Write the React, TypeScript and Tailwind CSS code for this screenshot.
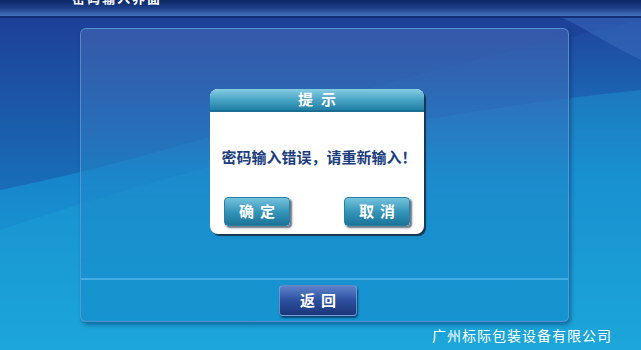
import React from "react";

const cjk = { fontFamily: '"Noto Sans CJK SC", "Noto Sans", sans-serif' };

function TealButton({ label }: { label: string }) {
  return (
    <div className="w-[66px] h-[29px] rounded-[4px] bg-gradient-to-b from-[#74c3dc] via-[#3596ba] to-[#1c7398] border border-[#2b7fa3] shadow-[2px_2px_2px_rgba(0,20,50,0.6)] flex items-center justify-center text-white text-[15px] font-bold tracking-[6px] pl-[6px]" style={cjk}>
      {label}
    </div>
  );
}

export default function App() {
  return (
    <div className="relative w-[641px] h-[350px] overflow-hidden bg-gradient-to-b from-[#1e3c96] via-[#1785cb] via-50% to-[#1ca7d9]">
      <svg className="absolute inset-0" width="641" height="350" viewBox="0 0 641 350">
        <path d="M0,0 H641 V20 C560,40 420,70 300,110 C200,140 100,170 0,190 Z" fill="#1c3a8f" opacity="0.35" />
        <path d="M250,17 L641,17 L641,60 C600,40 580,25 560,17 Z" fill="#3b6fc0" opacity="0.5" />
        <path d="M0,230 C150,180 350,120 641,90 V350 H0 Z" fill="#1ca6db" opacity="0.35" />
      </svg>
      <div className="relative flex flex-col">
        <div className="h-[16px] bg-gradient-to-b from-[#0d2764] via-[#1d3f8a] to-[#4573bd] relative overflow-hidden">
          <div className="absolute left-[72px] top-[-9px] text-white text-[13px] leading-[14px] font-bold tracking-[2px]" style={cjk}>
            密码输入界面
          </div>
        </div>
        <div className="h-[2px] bg-[#142e72]" />
        <div className="pl-[80px] pt-[10px]">
          <div className="w-[489px] h-[294px] rounded-[6px] border border-[#6f9ad8]/70 bg-gradient-to-b from-[#3b5eae]/80 via-[#1e87c9]/60 to-[#1493cf]/90 shadow-[2px_3px_4px_rgba(0,40,90,0.45)] flex flex-col">
            <div className="h-[249px] pl-[129px] pt-[60px]">
              <div className="w-[214px] h-[145px] rounded-[8px] bg-white shadow-[2px_2px_1px_#1a3550] flex flex-col overflow-hidden">
                <div className="h-[21px] bg-gradient-to-b from-[#86cde0] via-[#4aa6c6] to-[#1f7fa5] flex items-center justify-center text-white text-[15px] font-bold tracking-[8px] pl-[8px]" style={cjk}>
                  提示
                </div>
                <div className="h-[2px] bg-[#1c6f92]" />
                <div className="pt-[34px] pl-[4px] flex justify-center text-[#1c3d7e] text-[15px] font-bold" style={cjk}>
                  密码输入错误，请重新输入！
                </div>
                <div className="flex justify-between px-[14px] pt-[28px]">
                  <TealButton label="确定" />
                  <TealButton label="取消" />
                </div>
              </div>
            </div>
            <div className="h-[2px] bg-[#52b4e6]/80" />
            <div className="pl-[198px] pt-[5px]">
              <div className="w-[78px] h-[31px] rounded-[4px] bg-gradient-to-b from-[#5e84cc] via-[#2d4f9e] to-[#1b3679] border border-[#8aa6da]/70 shadow-[1px_2px_2px_rgba(0,20,60,0.6)] flex items-center justify-center text-white text-[15px] font-bold tracking-[6px] pl-[6px]" style={cjk}>
                返回
              </div>
            </div>
          </div>
        </div>
        <div className="pl-[432px] pt-[3px] text-white text-[14px] tracking-[1px] leading-[20px]" style={cjk}>
          广州标际包装设备有限公司
        </div>
      </div>
    </div>
  );
}
